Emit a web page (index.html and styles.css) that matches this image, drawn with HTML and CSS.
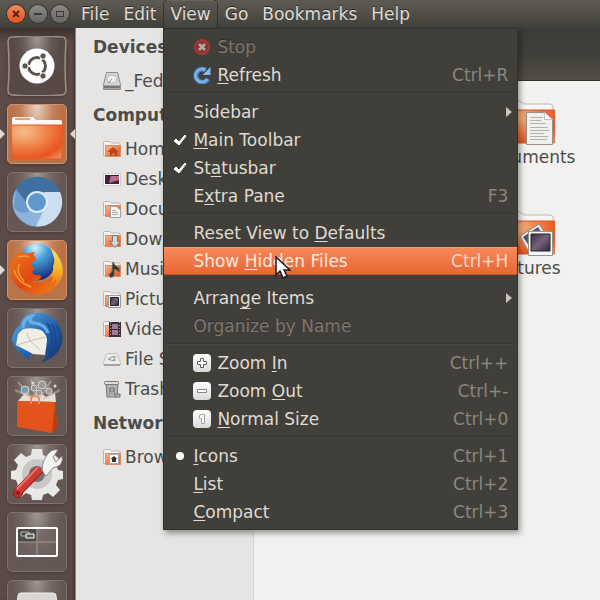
FILE: index.html
```html
<!DOCTYPE html>
<html lang="en">
<head>
    <meta charset="utf-8">
    <title>Home - File Manager</title>
    <link rel="stylesheet" href="styles.css">
</head>
<body>

<!-- shared gradients and shapes -->
<svg class="defs" width="0" height="0" aria-hidden="true">
    <defs>
        <linearGradient id="orange" x1="0" y1="0" x2="1" y2="1">
            <stop offset="0" stop-color="#f6bd8c"/><stop offset=".55" stop-color="#ee7a48"/><stop offset="1" stop-color="#dd5a2c"/>
        </linearGradient>
        <radialGradient id="bigorange" cx=".25" cy=".2" r="1">
            <stop offset="0" stop-color="#f5c088"/><stop offset=".45" stop-color="#f0814a"/><stop offset=".8" stop-color="#e95420"/><stop offset="1" stop-color="#f08a5c"/>
        </radialGradient>
        <linearGradient id="silver" x1="0" y1="0" x2="0" y2="1">
            <stop offset="0" stop-color="#ffffff"/><stop offset="1" stop-color="#dadada"/>
        </linearGradient>
        <linearGradient id="photo" x1="0" y1="0" x2="1" y2="1">
            <stop offset="0" stop-color="#3b3143"/><stop offset=".5" stop-color="#75617c"/><stop offset="1" stop-color="#2c2a33"/>
        </linearGradient>
        <linearGradient id="fox" x1="0" y1="0" x2="1" y2="1">
            <stop offset="0" stop-color="#ee7b1d"/><stop offset=".5" stop-color="#e0480f"/><stop offset="1" stop-color="#f08a1c"/>
        </linearGradient>
        <linearGradient id="tail" x1="0" y1="0" x2="0" y2="1">
            <stop offset="0" stop-color="#fbe07a"/><stop offset=".5" stop-color="#f9b52c"/><stop offset="1" stop-color="#e8701a"/>
        </linearGradient>
        <radialGradient id="globe" cx=".45" cy=".12" r=".9">
            <stop offset="0" stop-color="#d5f4ff"/><stop offset=".35" stop-color="#4aa5de"/><stop offset="1" stop-color="#10246e"/>
        </radialGradient>
        <linearGradient id="bird" x1="0" y1="0" x2="1" y2="1">
            <stop offset="0" stop-color="#62b0e8"/><stop offset=".5" stop-color="#2467b2"/><stop offset="1" stop-color="#14296b"/>
        </linearGradient>
        <symbol id="folder" viewBox="0 0 18 18">
            <path d="M.500 15.500V2.500q0-1 1-1H7l1.500 1.500H16q1 0 1 1v11.500z" fill="#f6f4f2" stroke="#b9b5b1"/>
            <path d="M2.500 5.500h15v11h-15z" fill="url(#orange)" stroke="#d98a66"/>
        </symbol>
        <symbol id="bigfolder" viewBox="0 0 56 48">
            <path d="M2 12V4q0-3 3-3h14l6 4h26q3 0 3 3v6H2z" fill="#f7f6f5" stroke="#bdbab7"/>
            <path d="M5 4h13" stroke="#ee8a58" stroke-width="2"/>
            <path d="M1 11h55v31q0 2-2 2H3q-2 0-2-2z" fill="url(#bigorange)" stroke="#cf5a2c"/>
        </symbol>
    </defs>
</svg>

<header class="menubar">
    <div class="window-buttons">
        <button class="close" aria-label="Close"><svg width="18" height="18"><path d="M6 6l6 6M12 6l-6 6" stroke="#5a2412" stroke-width="2"/></svg></button>
        <button aria-label="Minimize"><svg width="18" height="18"><path d="M5 9h8" stroke="#3c3b37" stroke-width="2"/></svg></button>
        <button aria-label="Maximize"><svg width="18" height="18"><rect x="5.500" y="6.500" width="7" height="5" fill="none" stroke="#3c3b37"/></svg></button>
    </div>
    <nav class="menus">
        <button>File</button>
        <button>Edit</button>
        <div class="open">
            <button aria-expanded="true">View</button>
            <div class="menu" role="menu">
                <button class="item" disabled>
                    <span class="mark"></span>
                    <svg class="icon" viewBox="0 0 18 18"><circle cx="9" cy="9" r="8.500" fill="#8d3032"/><circle cx="9" cy="9" r="7" fill="none" stroke="#a14c43"/><path d="M6 6l6 6M12 6l-6 6" stroke="#b5a9a5" stroke-width="2.500"/></svg>
                    <span class="label">Stop</span>
                </button>
                <button class="item">
                    <span class="mark"></span>
                    <svg class="icon" viewBox="0 0 18 18"><path d="M15 13A6.500 6.500 0 1 1 12.500 4" fill="none" stroke="#3f80c0" stroke-width="5"/><path d="M14.500 13A6.500 6.500 0 1 1 12.500 4" fill="none" stroke="#76b1e6" stroke-width="3"/><path d="M17.500 1v8H9.500z" fill="#86baea"/></svg>
                    <span class="label"><u>R</u>efresh</span>
                    <kbd>Ctrl+R</kbd>
                </button>
                <hr>
                <button class="item">
                    <span class="mark"></span>
                    <span class="label">Sidebar</span>
                    <span class="more"></span>
                </button>
                <button class="item" role="menuitemcheckbox" aria-checked="true">
                    <span class="mark"><svg width="14" height="12"><path d="M1 7l2-2 3 3 6-7 1 1-7 9z" fill="#fff" stroke="#fff"/></svg></span>
                    <span class="label"><u>M</u>ain Toolbar</span>
                </button>
                <button class="item" role="menuitemcheckbox" aria-checked="true">
                    <span class="mark"><svg width="14" height="12"><path d="M1 7l2-2 3 3 6-7 1 1-7 9z" fill="#fff" stroke="#fff"/></svg></span>
                    <span class="label">St<u>a</u>tusbar</span>
                </button>
                <button class="item" role="menuitemcheckbox" aria-checked="false">
                    <span class="mark"></span>
                    <span class="label">E<u>x</u>tra Pane</span>
                    <kbd>F3</kbd>
                </button>
                <hr>
                <button class="item">
                    <span class="mark"></span>
                    <span class="label">Reset View to <u>D</u>efaults</span>
                </button>
                <button class="item selected">
                    <span class="mark"></span>
                    <span class="label">Show <u>H</u>idden Files</span>
                    <kbd>Ctrl+H</kbd>
                    <svg class="cursor" width="16" height="24" viewBox="0 0 16 24"><path d="M1 1v18l4-4 3 7 4-2-3-6h6z" fill="#fff" stroke="#1b1626" stroke-width="1.500"/></svg>
                </button>
                <hr>
                <button class="item">
                    <span class="mark"></span>
                    <span class="label">Arran<u class="low">g</u>e Items</span>
                    <span class="more"></span>
                </button>
                <button class="item" disabled>
                    <span class="mark"></span>
                    <span class="label">Organize by Name</span>
                </button>
                <hr>
                <button class="item">
                    <span class="mark"></span>
                    <svg class="icon" viewBox="0 0 18 18"><rect width="18" height="18" rx="4" fill="url(#silver)"/><path d="M7.500 4.500h3v3h3v3h-3v3h-3v-3h-3v-3h3z" fill="#fff" stroke="#5e5e5e"/></svg>
                    <span class="label">Zoom <u>I</u>n</span>
                    <kbd>Ctrl++</kbd>
                </button>
                <button class="item">
                    <span class="mark"></span>
                    <svg class="icon" viewBox="0 0 18 18"><rect width="18" height="18" rx="4" fill="url(#silver)"/><path d="M4.500 7.500h9v3h-9z" fill="#fff" stroke="#888"/></svg>
                    <span class="label">Zoom <u>O</u>ut</span>
                    <kbd>Ctrl+-</kbd>
                </button>
                <button class="item">
                    <span class="mark"></span>
                    <svg class="icon" viewBox="0 0 18 18"><rect width="18" height="18" rx="4" fill="url(#silver)"/><path d="M6.500 5.500l2-1h3v9h-3v-5h-2z" fill="#fff" stroke="#a0a0a0"/></svg>
                    <span class="label"><u>N</u>ormal Size</span>
                    <kbd>Ctrl+0</kbd>
                </button>
                <hr>
                <button class="item" role="menuitemradio" aria-checked="true">
                    <span class="mark"><svg width="14" height="8"><circle cx="7" cy="4" r="4" fill="#fff"/></svg></span>
                    <span class="label"><u>I</u>cons</span>
                    <kbd>Ctrl+1</kbd>
                </button>
                <button class="item" role="menuitemradio" aria-checked="false">
                    <span class="mark"></span>
                    <span class="label"><u>L</u>ist</span>
                    <kbd>Ctrl+2</kbd>
                </button>
                <button class="item" role="menuitemradio" aria-checked="false">
                    <span class="mark"></span>
                    <span class="label"><u>C</u>ompact</span>
                    <kbd>Ctrl+3</kbd>
                </button>
            </div>
        </div>
        <button>Go</button>
        <button>Bookmarks</button>
        <button>Help</button>
    </nav>
</header>

<div class="desktop">
    <aside class="launcher">
        <button class="tile dash" aria-label="Dash">
            <svg viewBox="0 0 60 60">
                <path d="M5 1Q30-1 55 1Q59 1 59 6Q57 30 59 54Q59 59 54 59Q30 61 6 59Q1 59 1 54Q3 30 1 6Q1 1 5 1z" fill="none" stroke="#9a8f85" stroke-width="1.500"/>
                <circle cx="30" cy="30" r="17.500" fill="#fff"/>
                <circle cx="30" cy="30" r="8.500" fill="none" stroke="#5b5350" stroke-width="3"/>
                <path d="M30 30L14 30M30 30L38 16M30 30L38 44" stroke="#fff" stroke-width="2"/>
                <circle cx="30" cy="30" r="6.500" fill="#fff"/>
                <g fill="#5b5350" stroke="#fff"><circle cx="18" cy="30" r="3.200"/><circle cx="36" cy="20" r="3.200"/><circle cx="36" cy="40" r="3.200"/></g>
            </svg>
        </button>
        <button class="tile running focused" aria-label="Home Folder">
            <svg viewBox="0 0 60 60">
                <path d="M5 24V15q0-2 2-2h19l3 3h24q2 0 2 2v6z" fill="#faf9f8"/>
                <path d="M8 15h15" stroke="#f2a06b" stroke-width="2"/>
                <path d="M4 21h52l-1 32q0 2-2 2H7q-2 0-2-2z" fill="url(#bigorange)" stroke="#dd5c2a"/>
            </svg>
        </button>
        <button class="tile" aria-label="Chromium">
            <svg viewBox="0 0 60 60">
                <circle cx="30" cy="30" r="24.500" fill="#8db4df"/>
                <path d="M9 17A24.500 24.500 0 0 1 53 20H30L19 33z" fill="#3f709f"/>
                <path d="M53 20A24.500 24.500 0 0 1 29 54.500L40 31L37 20z" fill="#cbdff1"/>
                <path d="M9 17L7 35Q11 43 22 40L19 30z" fill="#6a9acb"/>
                <circle cx="30" cy="30" r="11" fill="#dfeefa"/><circle cx="30" cy="30" r="9" fill="#5f98cc"/>
            </svg>
        </button>
        <button class="tile running orange" aria-label="Firefox">
            <svg viewBox="0 0 60 60">
                <circle cx="30" cy="22" r="18.500" fill="url(#globe)"/>
                <path d="M12 9Q15 14 22 13Q27 12 28 12Q26 15 28 17L29 20Q25 22 24 24Q25 27 28 29Q24 31 26 34Q29 36 33 35Q35 37 33 39Q28 42 24 41Q33 45 43 39Q49 33 50 28L56 31Q54 43 45 50Q34 57 21 53Q8 48 4 36Q2 27 5 20Q7 16 11 14z" fill="url(#fox)"/>
                <path d="M44 8Q56 18 56 33Q54 43 46 49Q50 42 49 39L44 44Q47 37 45 36L41 39Q47 32 46 27Q48 21 47 18z" fill="url(#tail)"/>
                <path d="M11 17Q17 15 22 17M7 30Q10 42 24 47M12 24Q9 34 17 41" fill="none" stroke="#f59a3a" stroke-width="1.500"/>
            </svg>
        </button>
        <button class="tile" aria-label="Thunderbird">
            <svg viewBox="0 0 60 60">
                <path d="M5 30Q7 21 13 17Q16 4 31 5Q42 5 50 14Q57 23 55 35Q52 48 34 55L40 47L24 45L22 52Q9 45 5 32z" fill="url(#bird)"/>
                <path d="M11 26L16 21Q25 19 34 22Q40 26 40 33L38 47L26 46L9 37z" fill="#f1eee5"/>
                <path d="M20 25L23 33L38 29M10 37L23 33L33 42" fill="none" stroke="#c5bfb3"/>
                <path d="M16 20Q16 10 25 8Q20 14 27 15Q38 16 41 25" fill="none" stroke="#65b2e9" stroke-width="3"/>
                <path d="M45 16Q54 33 41 48M40 15Q50 28 41 42M50 18Q57 33 47 45" fill="none" stroke="#17488f" stroke-width="1.500"/>
            </svg>
        </button>
        <button class="tile" aria-label="Software Center">
            <svg viewBox="0 0 60 60">
                <path d="M11 25L18 17L24 21L32 16L39 21L48 17L49 26z" fill="#e9dfd5"/>
                <path d="M26 23L11 6M29 22L24 4M33 22L44 5M36 23L53 14M25 22L8 14" stroke="#c7c0bb" opacity=".5" stroke-width="2"/>
                <g fill="#9b9896" stroke="#d9d7d5"><circle cx="18" cy="14" r="4"/><circle cx="27" cy="12" r="3"/><circle cx="35" cy="9" r="4"/><circle cx="42" cy="15" r="3"/><circle cx="32" cy="17" r="3"/></g>
                <circle cx="17" cy="14" r="2.500" fill="#5ca0c7"/><circle cx="48" cy="10" r="1.500" fill="#e3d9d2"/><circle cx="26" cy="7" r="1.500" fill="#e3d9d2"/>
                <path d="M10 25L48 26L50 51L45 57L10 51z" fill="#e2541c"/><path d="M48 26L50 51L45 57z" fill="#bd3d0c"/>
                <path d="M24 28v-5q0-3 4-3t4 3v5" fill="none" stroke="#f08a5c" stroke-width="2"/>
            </svg>
        </button>
        <button class="tile" aria-label="System Settings">
            <svg viewBox="0 0 60 60">
                <path d="M25 5h10l1 6 5 2 5-4 7 7-4 5 2 5 5 1v8l-5 1-2 5 4 5-7 7-5-4-5 2-1 5H25l-1-5-5-2-5 4-7-7 4-5-2-5-5-1v-8l5-1 2-5-4-5 7-7 5 4 5-2z" fill="#e8e8e7"/>
                <circle cx="30" cy="30" r="15" fill="#c9c8c7"/><circle cx="30" cy="30" r="8" fill="#77706d"/>
                <path d="M35 27Q35 14 44 7Q48 5 51 6L46 13L49 18L55 12Q57 22 46 24L39 32z" fill="#f3f3f2" stroke="#8b8785"/>
                <path d="M10 49L33 25" stroke="#8f1d1d" stroke-width="9"/>
                <circle cx="11" cy="49" r="4.500" fill="#c12e29" stroke="#8f1d1d"/>
                <path d="M11 48L33 25" stroke="#d03a34" stroke-width="7"/>
                <path d="M10 45L31 23" stroke="#ed7568" stroke-width="2"/><circle cx="11" cy="49" r="2" fill="#8f1d1d"/>
            </svg>
        </button>
        <button class="tile" aria-label="Workspace Switcher">
            <svg viewBox="0 0 60 60">
                <rect x="10" y="16" width="40" height="28" rx="1" fill="#75686480" stroke="#fff" stroke-width="2"/>
                <path d="M11 17h19v13H11z" fill="#4d4944"/>
                <path d="M30 17v26M11 30h38" stroke="#a39b97"/>
                <path d="M14 20h8v4h-8z" fill="none" stroke="#bbb"/><path d="M19 22h8v4h-8z" fill="#5f5b57" stroke="#fff"/>
            </svg>
        </button>
        <button class="tile" aria-label="Disk">
            <svg viewBox="0 0 60 60"><path d="M14 13h32q3 0 3 3l4 33H7l4-33q0-3 3-3z" fill="#d8d7d6" stroke="#f0efee"/></svg>
        </button>
    </aside>

    <aside class="sidebar">
        <h2>Devices</h2>
        <a href="#"><svg class="icon" viewBox="0 0 18 18"><path d="M3.500.500h11l3 12v5H.500v-5z" fill="#d6d6d6" stroke="#8c8c8c"/><path d="M1 13.500h16v3H1z" fill="#777"/><ellipse cx="9" cy="7" rx="5" ry="4" fill="#efefef" stroke="#b5b5b5"/><path d="M5 11l4-4" stroke="#999"/></svg>_Fedora</a>
        <h2>Computer</h2>
        <a href="#"><svg class="icon" viewBox="0 0 18 18"><use href="#folder"/><path d="M10 7l5.500 5h-1.500v4h-2.500v-3h-2v3H7v-4H4.500z" fill="#b8461c"/></svg>Home</a>
        <a href="#"><svg class="icon" viewBox="0 0 18 18"><rect x=".5" y="3.500" width="17" height="12" fill="#fff" stroke="#d0cecd"/><rect x="2" y="5" width="14" height="9" fill="#4a1d3a"/><path d="M8 5h8v5L6 13z" fill="#b3708f"/><path d="M2 5h14v1H2z" fill="#222"/></svg>Desktop</a>
        <a href="#"><svg class="icon" viewBox="0 0 18 18"><use href="#folder"/><path d="M7.500 6.500h6l4 3.500v7.500h-10z" fill="#f4f4f3" stroke="#a0a0a0"/><path d="M9 10.500h4M9 12.500h6M9 14.500h6" stroke="#aaa"/></svg>Documents</a>
        <a href="#"><svg class="icon" viewBox="0 0 18 18"><use href="#folder"/><path d="M9.500 5.500h5v6h3l-5.500 6-5.500-6h3z" fill="#d6d5d4" stroke="#777"/></svg>Downloads</a>
        <a href="#"><svg class="icon" viewBox="0 0 18 18"><use href="#folder"/><path d="M10 2q1 4 6 6v4q-2-3-5-3v6q-1 3-4 2-2-3 2-5z" fill="#333533" stroke="#5b5b56"/></svg>Music</a>
        <a href="#"><svg class="icon" viewBox="0 0 18 18"><use href="#folder"/><path d="M5.500 5.500h12v12h-12z" fill="#f5f5f5" stroke="#999"/><path d="M7.500 7.500h8v8h-8z" fill="url(#photo)" stroke="#222"/></svg>Pictures</a>
        <a href="#"><svg class="icon" viewBox="0 0 18 18"><use href="#folder"/><path d="M6 2h12v15H6z" fill="#3a3236"/><path d="M9 4h6v5H9zM9 10h6v5H9z" fill="#a9779a"/><path d="M7.500 2v15M16.500 2v15" stroke="#a9a3a3" stroke-dasharray="1 2"/></svg>Videos</a>
        <a href="#"><svg class="icon" viewBox="0 0 18 18"><path d="M4 3.500h10l3.500 9v2H.500v-2z" fill="#ececeb" stroke="#c2c1c0"/><path d="M1 14h16v2H1z" fill="#a5a4a3"/><path d="M5 9l6-3v5zM11 7h2M10 10h3" fill="none" stroke="#999"/></svg>File System</a>
        <a href="#"><svg class="icon" viewBox="0 0 18 18"><path d="M3 4h12l-1 13H4z" fill="#b4b4b3" stroke="#747473"/><rect x="1.500" y="1.500" width="14" height="3" rx="1" fill="#ddd" stroke="#777"/><path d="M6 7l1 8M12 7l-1 8" stroke="#8a8a8a"/><circle cx="9" cy="10" r="2" fill="none" stroke="#6d6d6d"/><path d="M12 14h5v3h-5z" fill="#aaa" stroke="#777"/></svg>Trash</a>
        <h2>Network</h2>
        <a href="#"><svg class="icon" viewBox="0 0 18 18"><use href="#folder"/><path d="M6.500 6.500h9v9h-9z" fill="#fff" stroke="#aaa"/><path d="M11 8l3.500 3H13v3H9v-3H7.500z" fill="#333"/></svg>Browse Net</a>
    </aside>

    <main class="window">
        <div class="toolbar"></div>
        <div class="files">
            <a href="#"><svg width="56" height="48"><use href="#bigfolder"/></svg>Desktop</a>
            <a href="#"><svg width="56" height="48">
                <use href="#bigfolder"/>
                <path d="M27.500 13.500h18l8 7v25h-26z" fill="#f0efee" stroke="#96938f"/>
                <path d="M45.500 13.500v7h8" fill="#fff" stroke="#c5c3c0"/>
                <path d="M31 18.500h13M31 21.500h11M31 24.500h16M31 28.500h18M31 31.500h19M31 34.500h14M31 37.500h18M31 40.500h17" stroke="#b3b1ae"/>
            </svg>Documents</a>
            <a href="#"><svg width="56" height="48"><use href="#bigfolder"/></svg>Music</a>
            <a href="#"><svg width="56" height="48">
                <use href="#bigfolder"/>
                <path d="M21 26L40 14L52 32L31 44z" fill="#eee" stroke="#8d8987"/><path d="M24 27L39 17L47 29L32 39z" fill="url(#photo)"/>
                <path d="M29.500 21.500h24v24h-24z" fill="#f7f7f7" stroke="#96938f"/><path d="M32 24h19v17H32z" fill="url(#photo)" stroke="#222"/>
            </svg>Pictures</a>
        </div>
    </main>
</div>

</body>
</html>
```

FILE: styles.css
```css
* { box-sizing: border-box; }
body { margin: 0; height: 100vh; display: flex; flex-direction: column; overflow: hidden; font: 17px/20px "DejaVu Sans", sans-serif; color: #4c4c4c; background: #f2f1f0; }
button { font: inherit; color: inherit; background: none; border: 0; padding: 0; margin: 0; text-align: left; }
a { color: inherit; text-decoration: none; }
svg { display: block; flex: none; }
.defs { position: absolute; }
.icon { width: 18px; height: 18px; }

/* top panel */
.menubar { flex: none; height: 28px; display: flex; align-items: stretch; background: linear-gradient(#5c5a52, #56544c 30%, #403f3a); color: #dfdbd2; position: relative; z-index: 2; }
.window-buttons { display: flex; align-items: center; gap: 4px; padding-left: 7px; }
.window-buttons button { width: 18px; height: 18px; border-radius: 50%; background: linear-gradient(#8d8b85, #66645e); box-shadow: 0 0 0 1px #35342f; }
.window-buttons .close { background: linear-gradient(#f58b62, #e2501e); }
.menus { display: flex; padding-left: 6px; gap: 2px; }
.menus > button, .open > button { height: 28px; padding: 0 6px; text-shadow: 0 -1px #2c2b28; }
.open { position: relative; }
.open > button { background: linear-gradient(#5a5850, #45433e); border-radius: 5px 5px 0 0; box-shadow: 0 0 0 1px #33322e, inset 0 1px #67655d; }

/* drop-down */
.menu { position: absolute; top: 28px; left: -1px; width: 355px; padding: 4px 0 3px; background: #413f3a; border: 1px solid #33322e; box-shadow: 2px 3px 6px rgba(0, 0, 0, .4); }
.item { display: flex; align-items: center; width: 100%; height: 28px; padding-right: 9px; position: relative; }
.item .mark { width: 29px; padding-left: 9px; flex: none; }
.item .label { flex: 1; }
.item .icon + .label { padding-left: 6px; }
.item kbd { font: inherit; color: #8b877f; }
.item:disabled { color: #7d7871; text-shadow: 0 -1px #2c2b28; }
.item u { text-underline-offset: 2px; text-decoration-thickness: 1px; text-decoration-skip-ink: none; }
.item u.low { text-underline-offset: 4px; }
.item.selected { background: linear-gradient(#f68a5d, #e76631); box-shadow: inset 0 1px #fa9a70, inset 0 -1px #bf552b; color: #fae9df; }
.item.selected kbd { color: #f9d5c2; }
.more { border-left: 6px solid #c9c4bb; border-top: 5px solid transparent; border-bottom: 5px solid transparent; margin-right: -4px; }
.menu hr { height: 2px; margin: 3px 2px 4px; border: 0; border-top: 1px solid #383732; background: #464540; }
.cursor { position: absolute; left: 111px; top: 9px; }

.desktop { flex: 1; display: flex; min-height: 0; }

/* launcher */
.launcher { flex: none; width: 76px; padding: 8px 9px 0 7px; display: flex; flex-direction: column; gap: 8px; overflow: hidden; background: linear-gradient(#3b302d, #5c4b47 14px, #5a4a47); border-right: 1px solid #8a827f; box-shadow: inset -2px 0 2px #463a37; }
.tile { flex: none; width: 60px; height: 60px; position: relative; border: 1px solid #7f736f; border-radius: 5px; background: radial-gradient(ellipse at 50% 0, #c5bebb99, #8a7e7a66 35%, transparent 60%), #655753; box-shadow: 0 1px 3px #463a37; }
.tile svg { width: 60px; height: 60px; margin: -1px; }
.tile.dash { border-color: transparent; background: radial-gradient(ellipse at 50% 0, #b5adaacc, #7d726e66 35%, transparent 60%), #54484480; }
.tile.focused, .tile.orange { border-color: #d0936e; background: radial-gradient(ellipse at 50% 0, #ebd3c4, #cf946f66 40%, transparent 60%), #bb7249; }
.running::before, .focused::after { content: ""; position: absolute; top: 24px; border: 5px solid transparent; }
.running::before { left: -8px; border-left-color: #ddd9d7; border-right: 0; }
.focused::after { right: -9px; border-right-color: #ddd9d7; border-left: 0; }

/* places */
.sidebar { flex: none; width: 178px; overflow: hidden; background: #e6e5e3; border-right: 1px solid #d5d3d1; white-space: nowrap; }
.sidebar h2 { margin: 0; padding: 9px 0 9px 17px; font-size: 17px; line-height: 20px; }
.sidebar a { display: flex; align-items: center; gap: 4px; height: 30px; padding-left: 27px; }

.window { flex: 1; min-width: 0; }
.toolbar { height: 53px; background: linear-gradient(#3b3a36, #403f3a 50%, #514e45); border-bottom: 1px solid #34332f; }
.files { display: grid; grid-template-columns: repeat(2, 182px); row-gap: 43px; padding-top: 18px; }
.files a { display: flex; flex-direction: column; align-items: center; }
```
